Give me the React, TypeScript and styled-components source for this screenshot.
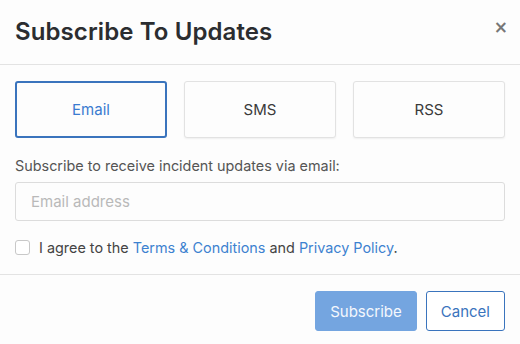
import React, { useState } from 'react';
import styled, { createGlobalStyle } from 'styled-components';

const GlobalStyle = createGlobalStyle`
  html, body {
    margin: 0;
    padding: 0;
    background: #fdfdfd;
  }
  body {
    font-family: Inter, "Open Sans", "Liberation Sans", sans-serif;
    color: #333;
  }
`;

const Dialog = styled.div`
  width: 520px;
  height: 344px;
  background: #fdfdfd;
  display: flex;
  flex-direction: column;
`;

const Header = styled.div`
  height: 65px;
  box-sizing: border-box;
  padding: 0 15px;
  display: flex;
  align-items: center;
  justify-content: space-between;
  border-bottom: 1px solid #e3e3e3;
`;

const Title = styled.h3`
  margin: 0;
  font-size: 24px;
  font-weight: 600;
  color: #2b2d30;
  letter-spacing: 0.1px;
  padding-bottom: 2px;
`;

const Close = styled.button`
  border: none;
  background: none;
  padding: 0;
  margin: -10px -3px 0 0;
  color: #777;
  font-size: 17px;
  font-weight: 700;
  line-height: 1;
  cursor: pointer;
  font-family: "DejaVu Sans", sans-serif;
`;

const Body = styled.div`
  padding: 16px 15px 0;
  display: flex;
  flex-direction: column;
  border-bottom: 1px solid #e3e3e3;
  height: 210px;
  box-sizing: border-box;
`;

const Tabs = styled.div`
  display: grid;
  grid-template-columns: repeat(3, 152px);
  gap: 17px;
`;

const Tab = styled.button<{ $active?: boolean }>`
  height: 57px;
  box-sizing: border-box;
  background: #fdfdfd;
  border: ${(p) => (p.$active ? '2px solid #3a74bd' : '1px solid #e2e2e2')};
  border-radius: 3px;
  box-shadow: ${(p) => (p.$active ? 'none' : '0 1px 2px rgba(0, 0, 0, 0.06)')};
  color: ${(p) => (p.$active ? '#3a7bd0' : '#3a3a3a')};
  font-family: inherit;
  font-size: 15px;
  cursor: pointer;
`;

const Label = styled.div`
  margin-top: 19px;
  font-size: 14.4px;
  color: #555;
  line-height: 18px;
`;

const Input = styled.input`
  margin-top: 7px;
  height: 39px;
  box-sizing: border-box;
  border: 1px solid #dcdcdc;
  border-radius: 3px;
  background: #fdfdfd;
  padding: 0 15px;
  font-family: inherit;
  font-size: 15px;
  color: #333;
  outline: none;
  &::placeholder {
    color: #b9b9b9;
  }
`;

const AgreeRow = styled.label`
  margin-top: 18px;
  display: flex;
  align-items: center;
  gap: 9px;
  font-size: 14.4px;
  color: #444;
`;

const Box = styled.span`
  width: 15px;
  height: 15px;
  box-sizing: border-box;
  border: 1px solid #c8c8c8;
  border-radius: 3px;
  background: #fff;
  flex: none;
`;

const Link = styled.a`
  color: #3d82d0;
  text-decoration: none;
`;

const Footer = styled.div`
  flex: 1;
  display: flex;
  justify-content: flex-end;
  align-items: flex-start;
  gap: 9px;
  padding: 16px 15px 0;
`;

const Button = styled.button<{ $primary?: boolean }>`
  height: 40px;
  box-sizing: border-box;
  padding: 0 14px;
  border-radius: 3px;
  font-family: inherit;
  font-size: 15px;
  cursor: pointer;
  border: 1px solid ${(p) => (p.$primary ? '#74a5e0' : '#3a74bd')};
  background: ${(p) => (p.$primary ? '#74a5e0' : '#fff')};
  color: ${(p) => (p.$primary ? '#f4f8fd' : '#3a74bd')};
`;

export default function App() {
  const [mode, setMode] = useState('Email');
  return (
    <>
      <GlobalStyle />
      <Dialog>
        <Header>
          <Title>Subscribe To Updates</Title>
          <Close aria-label="Close">×</Close>
        </Header>
        <Body>
          <Tabs>
            {['Email', 'SMS', 'RSS'].map((t) => (
              <Tab key={t} $active={mode === t} onClick={() => setMode(t)}>
                {t}
              </Tab>
            ))}
          </Tabs>
          <Label>Subscribe to receive incident updates via email:</Label>
          <Input placeholder="Email address" />
          <AgreeRow>
            <Box />
            <span>
              I agree to the <Link href="#">Terms &amp; Conditions</Link> and{' '}
              <Link href="#">Privacy Policy</Link>.
            </span>
          </AgreeRow>
        </Body>
        <Footer>
          <Button $primary>Subscribe</Button>
          <Button>Cancel</Button>
        </Footer>
      </Dialog>
    </>
  );
}
